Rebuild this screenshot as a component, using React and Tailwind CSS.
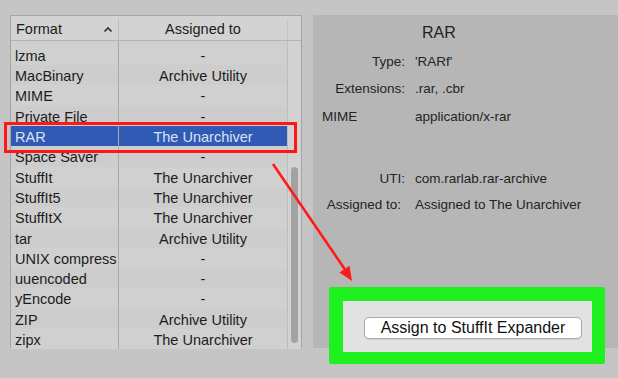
import React from "react";

const rows = [
  ["lzma", "-"],
  ["MacBinary", "Archive Utility"],
  ["MIME", "-"],
  ["Private File", "-"],
  ["RAR", "The Unarchiver"],
  ["Space Saver", "-"],
  ["StuffIt", "The Unarchiver"],
  ["StuffIt5", "The Unarchiver"],
  ["StuffItX", "The Unarchiver"],
  ["tar", "Archive Utility"],
  ["UNIX compress", "-"],
  ["uuencoded", "-"],
  ["yEncode", "-"],
  ["ZIP", "Archive Utility"],
  ["zipx", "The Unarchiver"],
];

const SEL = 4;

function cellBg(i) {
  if (i === SEL) return "bg-[#2f5bb5] text-[#dde2ee]";
  return i % 2 === 0 ? "bg-[#d0d0d0] text-[#1c1c1c]" : "bg-[#cdcdcd] text-[#1c1c1c]";
}

function Table() {
  return (
    <div className="w-[292px] h-[333px] border border-[#a4a4a4] bg-[#cfcfcf] flex flex-col">
      <div className="flex h-[25px] pt-[3px] bg-[#d3d3d3] border-b border-[#b4b4b4] text-[14.5px] text-[#1c1c1c]">
        <div className="w-[107px] pl-[5px] pr-[5px] flex items-center justify-between">
          <span>Format</span>
          <svg width="10" height="7" viewBox="0 0 10 7">
            <polyline points="1.5,5.5 5,2 8.5,5.5" fill="none" stroke="#333" strokeWidth="1.7" />
          </svg>
        </div>
        <div className="w-[169px] border-l border-[#bdbdbd] flex items-center justify-center">
          Assigned to
        </div>
        <div className="flex-1 border-l border-[#c4c4c4]" />
      </div>
      <div className="flex flex-1 text-[14.5px]">
        <div className="w-[107px] pt-[3.85px]">
          {rows.map((r, i) => (
            <div key={i} className={`h-[20.3px] pt-[3px] leading-[17.3px] pl-[4px] whitespace-nowrap ${cellBg(i)}`}>
              {r[0]}
            </div>
          ))}
        </div>
        <div className="w-[169px] pt-[3.85px] border-l border-[#a9a9a9]">
          {rows.map((r, i) => (
            <div key={i} className={`h-[20.3px] pt-[3px] leading-[17.3px] text-center whitespace-nowrap ${cellBg(i)}`}>
              {r[1]}
            </div>
          ))}
        </div>
        <div className="flex-1 border-l border-[#bcbcbc] bg-[#d2d2d2] pl-[3px]">
          <div className="mt-[126px] w-[7px] h-[176px] rounded-full bg-[#a2a2a2]" />
        </div>
      </div>
    </div>
  );
}

function Panel() {
  return (
    <div className="ml-[11px] w-[305px] h-[333px] bg-[#b6b6b6] pt-[8px] text-[13.5px] text-[#242424]">
      <div className="h-[20px] leading-[20px] ml-[109px] text-[16px] text-[#222]">RAR</div>
      <div className="mt-[9px] flex h-[20px] leading-[20px]">
        <div className="w-[92px] text-right">Type:</div>
        <div className="ml-[10px]">'RARf'</div>
      </div>
      <div className="mt-[7px] flex h-[20px] leading-[20px]">
        <div className="w-[92px] text-right">Extensions:</div>
        <div className="ml-[10px]">.rar, .cbr</div>
      </div>
      <div className="mt-[8px] flex h-[20px] leading-[20px]">
        <div className="w-[92px] pl-[9px]">MIME</div>
        <div className="ml-[10px]">application/x-rar</div>
      </div>
      <div className="mt-[42px] flex h-[20px] leading-[20px]">
        <div className="w-[92px] text-right">UTI:</div>
        <div className="ml-[10px]">com.rarlab.rar-archive</div>
      </div>
      <div className="mt-[6px] flex h-[20px] leading-[20px]">
        <div className="w-[88px] text-right">Assigned to:</div>
        <div className="ml-[14px] whitespace-nowrap">Assigned to The Unarchiver</div>
      </div>
    </div>
  );
}

export default function App() {
  return (
    <div
      className="relative w-[618px] h-[378px] overflow-hidden bg-[#c5c5c5]"
      style={{ fontFamily: '"Liberation Sans", Arial, sans-serif' }}
    >
      <div className="flex pt-[15px] pl-[10px]">
        <Table />
        <Panel />
      </div>

      {/* red highlight box */}
      <div className="absolute left-[4px] top-[122px] w-[293px] h-[31px] border-[3px] border-[#ff1616]" />

      {/* red arrow */}
      <svg className="absolute left-0 top-0" width="618" height="378" viewBox="0 0 618 378">
        <line x1="273" y1="164" x2="346" y2="271" stroke="#ff1a1a" strokeWidth="2.6" />
        <polygon points="352,281 339.5,272.5 349.5,265.8" fill="#ff1a1a" />
      </svg>

      {/* green highlight with button */}
      <div className="absolute left-[329px] top-[287px] w-[276px] h-[77px] rounded-[2px] bg-[#1ff01f] pt-[14px] pl-[14px] pr-[13px] pb-[12px]">
        <div className="w-full h-full bg-[#e2e2e2] pl-[21px] pt-[16px]">
          <div className="w-[218px] h-[22px] rounded-[5px] bg-white border border-[#a9a9a9] shadow-[0_1px_0_rgba(0,0,0,0.08)] flex items-center justify-center text-[16px] text-[#111] whitespace-nowrap">
            Assign to StuffIt Expander
          </div>
        </div>
      </div>
    </div>
  );
}
